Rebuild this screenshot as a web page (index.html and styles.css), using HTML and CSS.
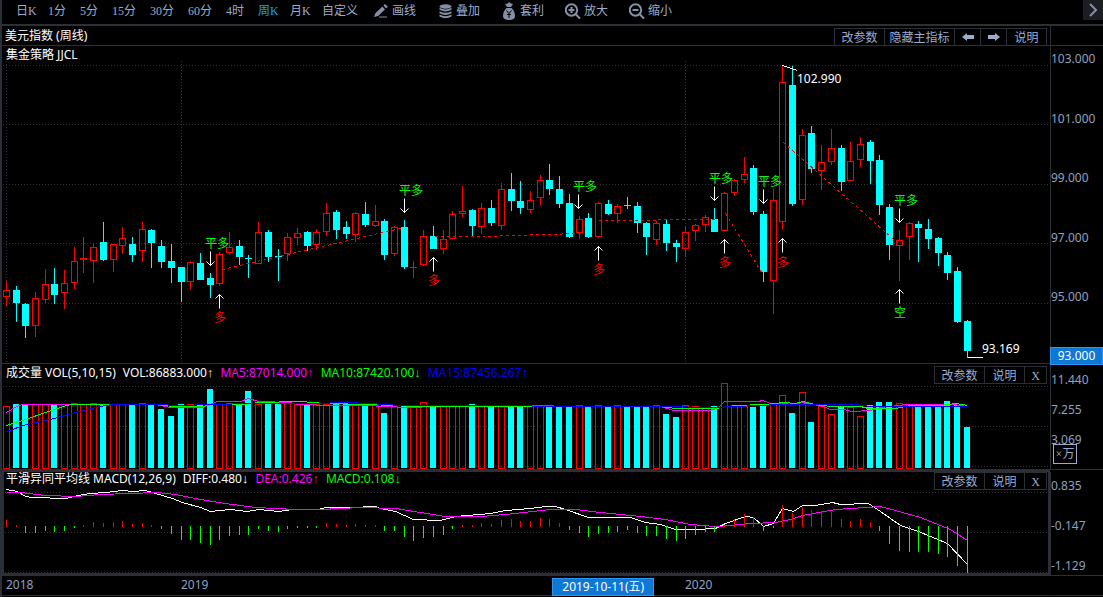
FILE: index.html
```html
<!DOCTYPE html>
<html lang="zh-CN">
<head>
<meta charset="utf-8">
<title>美元指数 (周线)</title>
<link rel="stylesheet" href="styles.css">
</head>
<body>
<div class="app">
  <nav class="toolbar">
    <div class="periods">
      <button class="period">日K</button>
      <button class="period">1分</button>
      <button class="period">5分</button>
      <button class="period period-wide">15分</button>
      <button class="period period-wide">30分</button>
      <button class="period period-wide">60分</button>
      <button class="period">4时</button>
      <button class="period active">周K</button>
      <button class="period">月K</button>
      <button class="period period-custom">自定义</button>
    </div>
    <div class="tools">
      <button class="tool">
        <svg class="icon" viewBox="0 0 16 18"><path d="M1 15l1.500-4 7-6.500 2.500 3-7 6.500zM10.500 3.500L12 2l2.800 2.800L13 6.500z"/><path d="M6 14.500h8v1H6z"/></svg>画线</button>
      <button class="tool">
        <svg class="icon" viewBox="0 0 16 18"><ellipse cx="8.500" cy="4.500" rx="6" ry="2.200"/><path d="M2.500 5.800q6 3.200 12 0v2q-6 3.400-12 0zM2.500 9.200q6 3.200 12 0v2q-6 3.400-12 0zM2.500 12.600q6 3.200 12 0v2q-6 3.400-12 0z"/></svg>叠加</button>
      <button class="tool">
        <svg class="icon" viewBox="0 0 16 18"><path d="M4 2l3-.5L8 0l2 1.500 2 .5-2 3H6zM5.500 6h5q3.500 3.500 3.500 8 0 4-6 4t-6-4q0-4.500 3.500-8z"/><path class="cut" d="M5.500 8.500l2.500 3 2.500-3M8 11.500V16M6 12.500h4"/></svg>套利</button>
      <button class="tool">
        <svg class="icon line" viewBox="0 0 16 18"><circle cx="6.500" cy="8" r="5.700"/><path d="M3.500 8h6M6.500 5v6M10.500 12l4.500 4.500"/></svg>放大</button>
      <button class="tool">
        <svg class="icon line" viewBox="0 0 16 18"><circle cx="6.500" cy="8" r="5.700"/><path d="M3.500 8h6M10.500 12l4.500 4.500"/></svg>缩小</button>
    </div>
    <button class="more" aria-label="更多"><svg viewBox="0 0 20 20"><path d="M7 4l6 6-6 6"/></svg></button>
  </nav>

  <main class="board">
    <header class="title">
      <h1>美元指数 (周线)</h1>
      <div class="actions">
        <button class="w50">改参数</button>
        <button class="w70">隐藏主指标</button>
        <button class="w26" aria-label="上一个"><svg viewBox="0 0 12 10"><path d="M0 5l5-4v2h7v4H5v2z"/></svg></button>
        <button class="w26" aria-label="下一个"><svg viewBox="0 0 12 10"><path d="M12 5L7 1v2H0v4h7v2z"/></svg></button>
        <button class="w40">说明</button>
      </div>
    </header>
    <div class="axis axis-title"></div>

    <section class="panel panel-price">
      <svg class="plot" id="price"></svg>
      <div class="legend"><span>集金策略 JJCL</span></div>
    </section>
    <div class="axis axis-price">
      <span>103.000</span><span>101.000</span><span>99.000</span><span>97.000</span><span>95.000</span>
      <b class="cursor-price">93.000</b>
    </div>

    <section class="panel panel-volume">
      <svg class="plot" id="volume"></svg>
      <div class="legend">
        <span>成交量 VOL(5,10,15)</span>
        <span>VOL:86883.000<i>↑</i></span>
        <span class="magenta">MA5:87014.000<i>↑</i></span>
        <span class="green">MA10:87420.100<i>↓</i></span>
        <span class="blue">MA15:87456.267<i>↑</i></span>
      </div>
      <div class="actions">
        <button class="w50">改参数</button><button class="w40">说明</button><button class="w22">X</button>
      </div>
    </section>
    <div class="axis axis-volume">
      <span>11.440</span><span>7.255</span><span>3.069</span>
      <button class="unit">×万</button>
    </div>

    <section class="panel panel-macd">
      <svg class="plot" id="macd"></svg>
      <div class="legend">
        <span>平滑异同平均线 MACD(12,26,9)</span>
        <span>DIFF:0.480<i>↓</i></span>
        <span class="magenta">DEA:0.426<i>↑</i></span>
        <span class="green">MACD:0.108<i>↓</i></span>
      </div>
      <div class="actions">
        <button class="w50">改参数</button><button class="w40">说明</button><button class="w22">X</button>
      </div>
    </section>
    <div class="axis axis-macd">
      <span>0.835</span><span>-0.147</span><span>-1.129</span>
    </div>

    <footer class="dates">
      <svg class="plot" id="dates"></svg>
      <b class="cursor-date">2019-10-11(五)</b>
    </footer>
    <div class="axis axis-dates"></div>
  </main>
</div>
<script src="chart.js"></script>
</body>
</html>
```
FILE: styles.css
```css
* { box-sizing: border-box; }

body {
  margin: 0;
  background: #000;
  color: #fff;
  font: 12px/16px "Noto Sans", "Noto Sans CJK SC", sans-serif;
  overflow: hidden;
}

button {
  margin: 0;
  padding: 0;
  border: 0;
  background: none;
  color: #9dabcb;
  font: 12px/16px "Liberation Serif", "Noto Sans CJK SC", serif;
  white-space: nowrap;
}

.app {
  display: flex;
  flex-direction: column;
  height: 100vh;
  padding-bottom: 1px;
  border-left: 2px solid #2c2f36;
}

.toolbar {
  display: flex;
  flex: none;
  height: 26px;
  padding-left: 14px;
  border-bottom: 2px solid #2c2f36;
}

.periods {
  display: flex;
  gap: 14px;
  height: 22px;
}

.period { width: 18px; text-align: left; }
.period-wide { width: 24px; }
.period-custom { width: 36px; }
.period.active { color: #1ba1f2; }

.tools {
  display: flex;
  gap: 21px;
  height: 22px;
  margin-left: 15px;
}

.tool {
  display: flex;
  align-items: center;
  gap: 3px;
}

.icon { width: 16px; height: 18px; fill: #8590a8; }
.icon .cut { fill: none; stroke: #000; }
.icon.line { fill: none; stroke: #8590a8; stroke-width: 2; }

.more {
  width: 20px;
  height: 20px;
  margin-left: auto;
  background: #1c1e23;
}

.more svg {
  display: block;
  fill: none;
  stroke: #8590a8;
  stroke-width: 2;
}

.board {
  display: grid;
  flex: 1;
  grid-template-columns: 1fr 53px;
  grid-template-rows: 20px 318fr 108fr 104fr 20px;
  min-height: 0;
}

.title {
  display: flex;
  align-items: flex-end;
  justify-content: space-between;
  padding-left: 3px;
  padding-right: 3px;
  border-bottom: 1px solid #2c2f36;
}

h1 {
  margin: 0;
  font-size: 12px;
  font-weight: 400;
  line-height: 18px;
}

.actions {
  display: flex;
  border: 1px solid #2c2f36;
  position: relative;
}

.title .actions { border-bottom: 0; }

.actions button {
  height: 16px;
  padding-top: 1px;
  border-left: 1px solid #2c2f36;
}

.actions button:first-child { border-left: 0; }
.actions .w22 { width: 22px; }
.actions .w26 { width: 26px; }
.actions .w40 { width: 40px; }
.actions .w50 { width: 49px; }
.actions .w70 { width: 70px; }
.actions svg { width: 12px; height: 10px; fill: #9dabcb; }

.panel {
  display: flex;
  position: relative;
  align-items: flex-start;
  justify-content: space-between;
  min-width: 0;
  min-height: 0;
  padding-right: 3px;
  padding-left: 4px;
}

.panel-price { border-bottom: 1px solid #2c2f36; }
.panel-volume { border-bottom: 3px solid #2c2f36; }
.panel-volume .actions { margin-top: 2px; }

.panel-macd {
  border-bottom: 3px solid #2c2f36;
  box-shadow: inset 2px 0 #2c2f36, inset -2px 0 #2c2f36;
}

.plot {
  position: absolute;
  top: 0;
  left: 0;
  width: 100%;
  height: 100%;
  overflow: visible;
}

.legend {
  display: flex;
  position: relative;
  gap: 7px;
  line-height: 18px;
  white-space: nowrap;
}

.panel-macd .legend { line-height: 14px; }

.legend i { font: 13px/12px "Liberation Sans", sans-serif; }
.magenta { color: #f0f; }
.green { color: #0f0; }
.blue { color: #00f; }

.axis {
  display: flex;
  position: relative;
  flex-direction: column;
  align-items: flex-start;
  justify-content: space-between;
  min-height: 0;
  border-left: 1px solid #2c2f36;
  border-bottom: 1px solid #2c2f36;
  color: #8fa0c0;
}

.axis-price { padding: 5px 0 58px; }
.axis-volume { padding: 8px 0 21px; margin-bottom: 2px; }
.axis-macd { padding: 6px 0 1px; }
.axis-dates { border-left-color: transparent; }

.cursor-price, .cursor-date {
  position: absolute;
  border: 1px solid #2b96f5;
  background: #0f78d4;
  color: #fff;
  font-weight: 400;
  text-align: center;
}

.cursor-price {
  right: 0;
  bottom: -2px;
  left: -1px;
  z-index: 1;
}

.cursor-date {
  bottom: -1px;
  left: 52.5%;
  width: 102px;
}

.unit {
  position: absolute;
  bottom: 5px;
  left: 2px;
  width: 24px;
  height: 20px;
  border: 1px solid #9dabcb;
}

.dates {
  position: relative;
  border-bottom: 1px solid #2c2f36;
}

svg text { font: 12px "Noto Sans", "Noto Sans CJK SC", sans-serif; }
.plot polyline, .plot line, .plot rect { shape-rendering: crispEdges; }
.plot polyline { fill: none; }
```
FILE: chart.js
```js
// Weekly bars: direction, high, body top, body bottom, low (vertical board units).
const bars = `R281,290,297,306 C286,290,303,322 C303,304,326,338 R292,298,326,337 R269,284,300,303
C268,284,295,304 R270,283,293,309 R247,261,283,289 R237,258,260,273 R243,247,261,283
C222,242,260,261 R244,244,260,272 R227,238,246,254 C237,244,255,262 R222,229,251,262
C229,230,243,268 C240,246,262,268 C244,261,268,283 C267,267,282,302 R261,262,282,289
C253,263,280,280 C273,278,285,298 R252,254,284,286 R232,247,253,255 C240,246,257,265
C255,258,259,278 R222,232,264,264 C230,232,257,262 C249,256,257,281 R233,237,254,261
R228,233,238,245 C231,232,246,251 R229,232,245,250 R203,213,232,236 C210,212,230,239
C221,227,234,239 R212,213,235,242 C202,214,225,227 R205,221,226,227 C219,221,255,260
R226,227,254,256 C220,227,267,269 R261,267,268,278 R230,236,265,266 C226,236,249,249
R230,239,249,254 R211,214,239,239 R186,211,214,217 C209,210,226,237 R203,208,227,234
C200,208,223,226 R183,189,226,230 C173,189,201,211 C181,201,208,214 R191,200,210,213
R175,180,198,205 C164,180,189,195 C176,189,204,208 C194,203,237,238 R216,219,233,239
C213,218,237,238 R202,203,237,238 C200,204,214,215 R204,206,214,223 C197,205,206,209
C202,206,223,233 C222,223,237,255 R221,223,240,245 C219,224,243,251 C240,243,247,262
R226,232,249,257 R224,225,231,241 R215,217,225,232 C208,219,232,232 R192,193,231,231
R179,180,193,196 R157,174,180,183 C165,168,212,215 C211,214,272,282 R189,200,281,314
R65,82,222,230 C66,85,204,206 R129,135,200,205 C126,133,169,173 R145,162,171,190
R129,148,162,165 C145,148,182,191 R142,161,181,181 R137,144,160,167 C140,142,161,184
C155,160,205,215 C204,207,245,260 R230,240,246,281 R222,223,237,260 C221,224,228,262
C219,229,239,249 C237,238,253,266 C252,255,273,280 C267,271,322,323 C320,321,351,358`
  .split(/\s+/).map(s => [s[0], ...s.slice(1).split(',').map(Number)]);

const volumes = [406,404,404,404,404,404,404,403,404,403,404,404,404,404,403,404,409,416,404,404,
  404,389,404,403,403,391,404,403,403,403,404,404,404,404,404,404,404,405,405,413,
  405,406,406,402,406,405,405,405,404,405,405,405,406,406,405,405,406,406,406,405,
  406,405,406,405,406,406,406,405,414,417,405,406,408,406,383,405,406,407,406,404,
  395,413,392,422,406,414,407,407,416,405,402,402,403,404,404,404,404,401,405,427];

const histogram = [520,525,533,533,531,532,531,528,525,522,523,522,521,524,523,525,529,534,540,540,
  543,545,540,536,535,535,529,531,532,529,528,528,528,523,524,525,524,525,525,531,
  531,537,541,538,537,535,529,525,525,523,524,520,519,521,521,518,519,523,530,533,
  537,534,533,532,530,533,536,536,539,541,539,535,532,532,525,519,514,517,531,528,
  505,513,507,510,511,512,519,521,519,522,531,544,551,552,552,552,554,557,566,573];

const ma5 = '6,412 16,406 22,404 155,404 170,407 202,407 217,401 240,401 248,398 258,401 290,402 297,404 333,405 370,405 380,406 413,407 430,406 447,405 660,406 673,410 708,410 717,408 724,401 758,401 762,400 773,404 783,403 792,404 802,402 810,404 820,405 830,409 843,409 852,411 870,410 880,407 907,404 953,404 967,406';
const ma10 = '6,425 25,419 45,412 66,405 72,404 157,404 172,406 202,406 212,404 243,404 258,402 300,401 325,403 370,404 390,405 420,406 660,406 675,408 715,408 735,405 765,404 783,402 795,403 802,401 815,404 830,406 860,406 868,408 895,408 910,405 940,405 955,403 967,405';
const ma15 = '6,431 26,424 50,419 75,412 100,406 112,404 160,404 175,405 215,404 250,403 310,403 350,402 385,404 400,405 660,406 715,407 735,406 780,404 855,404 870,406 967,406';
const diff = '6,489 17,491 25,496 32,497 66,498 77,495 90,493 105,492 122,490 132,491 145,490 155,493 172,498 182,502 200,507 210,511 230,509 247,511 258,509 278,511 292,509 318,509 325,507 350,507 375,506 380,508 395,511 413,519 440,520 455,516 490,513 505,510 530,508 545,506 555,506 565,509 588,517 630,517 645,522 660,524 675,529 695,529 715,528 725,523 745,516 753,517 763,526 773,523 782,508 793,511 802,505 815,505 832,502 840,504 868,503 880,511 900,525 918,531 947,543 967,564';
const dea = '6,492 20,492 45,495 75,496 100,494 157,492 175,494 200,499 225,503 255,507 295,509 320,509 360,507 395,508 420,512 445,516 480,516 505,514 550,509 575,509 600,512 640,516 665,519 690,524 715,526 730,525 750,523 775,522 790,519 802,515 835,509 880,506 895,510 920,517 950,529 967,540';

const RED = '#f00', CYAN = '#0ff', GREEN = '#0f0', MAGENTA = '#f0f', BLUE = '#00f', WHITE = '#fff', GRID = '#333';
const BOARD_WIDTH = 1048, BOARD_LEFT = 2;

// A drawing surface that maps board units onto the current size of an svg.
function surface(id, top, height) {
  const svg = document.getElementById(id);
  const box = svg.getBoundingClientRect();
  const X = x => Math.round((x - BOARD_LEFT) * box.width / BOARD_WIDTH);
  const Y = y => Math.round((y - top) * box.height / height);
  let out = '';
  return {
    X, Y,
    vline(x, y1, y2, color) {
      if (Y(y2) > Y(y1)) out += `<rect x="${X(x)}" y="${Y(y1)}" width="1" height="${Y(y2) - Y(y1)}" fill="${color}"/>`;
    },
    path(points, color, dash = '') {
      const mapped = points.split(' ').map(p => {
        const [x, y] = p.split(',').map(Number);
        return `${X(x) + 0.5},${Y(y) + 0.5}`;
      }).join(' ');
      out += `<polyline points="${mapped}" stroke="${color}" stroke-dasharray="${dash}"/>`;
    },
    box(x, y1, y2, filled, width = 7) {
      const h = Math.max(Y(y2) - Y(y1), 1), left = X(x) - 3;
      if (filled || h < 3) out += `<rect x="${left}" y="${Y(y1)}" width="${width}" height="${h}" fill="${filled ? CYAN : RED}"/>`;
      else out += `<rect x="${left + 0.5}" y="${Y(y1) + 0.5}" width="${width - 1}" height="${h - 1}" fill="none" stroke="${RED}"/>`;
    },
    text(x, y, s, color) { out += `<text x="${X(x)}" y="${Y(y)}" fill="${color}">${s}</text>`; },
    arrow(x, tip, dir) {
      const a = X(x) + 0.5, t = Y(tip) + 0.5;
      out += `<path d="M${a} ${t}v${-14 * dir}M${a - 4} ${t - 4 * dir}L${a} ${t}L${a + 4} ${t - 4 * dir}" fill="none" stroke="${WHITE}"/>`;
    },
    done() { svg.innerHTML = out; }
  };
}

const at = i => Math.floor(6.3 + i * 961 / 99);

function drawPrice() {
  const s = surface('price', 46, 317);
  [65, 124, 184, 243, 303].forEach(y => s.path(`2,${y} 1049,${y}`, GRID, '1 2'));
  [6, 181, 685].forEach(x => s.path(`${x},60 ${x},363`, GRID, '1 2'));
  bars.forEach(([kind, high, top, bottom, low], i) => {
    const color = kind === 'C' ? CYAN : RED;
    s.vline(at(i), high, top, color);
    s.vline(at(i), bottom, low, color);
    s.box(at(i), top, bottom, kind === 'C');
  });
  ['222,269 404,227', '434,236 482,236 578,233', '598,220 656,220 657,219 715,219', '725,213 763,275', '783,142 899,244']
    .forEach(p => s.path(p, RED, '3 3'));
  [[205, 248], [399, 195], [573, 191], [709, 183], [758, 186], [894, 205]].forEach(([x, y]) => s.text(x, y, '平多', GREEN));
  [[214, 322], [428, 285], [593, 274], [719, 267], [777, 267]].forEach(([x, y]) => s.text(x, y, '多', RED));
  s.text(894, 317, '空', GREEN);
  [[210, 265], [404, 212], [578, 208], [714, 200], [763, 203], [899, 222]].forEach(([x, y]) => s.arrow(x, y, 1));
  [[219, 294], [433, 257], [598, 246], [724, 239], [782, 238], [899, 289]].forEach(([x, y]) => s.arrow(x, y, -1));
  s.path('782,65 797,70', WHITE);
  s.text(797, 83, '102.990', WHITE);
  s.path('967,357 982,357', WHITE);
  s.text(982, 353, '93.169', WHITE);
  s.done();
}

function drawVolume() {
  const s = surface('volume', 364, 105);
  [386, 426, 466].forEach(y => s.path(`2,${y} 1049,${y}`, GRID, '1 2'));
  volumes.forEach((y, i) => {
    const filled = bars[i][0] === 'C';
    s.box(at(i), y, filled ? 468 : 469, filled, filled ? 6 : 7);
  });
  s.path(ma5, MAGENTA);
  s.path(ma10, GREEN);
  s.path(ma15, BLUE);
  s.done();
}

function drawMacd() {
  const s = surface('macd', 472, 101);
  [492, 532, 572].forEach(y => s.path(`4,${y} 1047,${y}`, GRID, '1 2'));
  s.path(diff, WHITE);
  s.path(dea, MAGENTA);
  histogram.forEach((y, i) => y < 526 ? s.vline(at(i), y, 527, RED) : s.vline(at(i), 526, y, GREEN));
  s.done();
}

function drawDates() {
  const s = surface('dates', 576, 19);
  [[6, 2018], [181, 2019], [685, 2020]].forEach(([x, year]) => s.text(x, 589, year, '#8fa0c0'));
  s.done();
}

function draw() { drawPrice(); drawVolume(); drawMacd(); drawDates(); }
draw();
addEventListener('resize', draw);
```
